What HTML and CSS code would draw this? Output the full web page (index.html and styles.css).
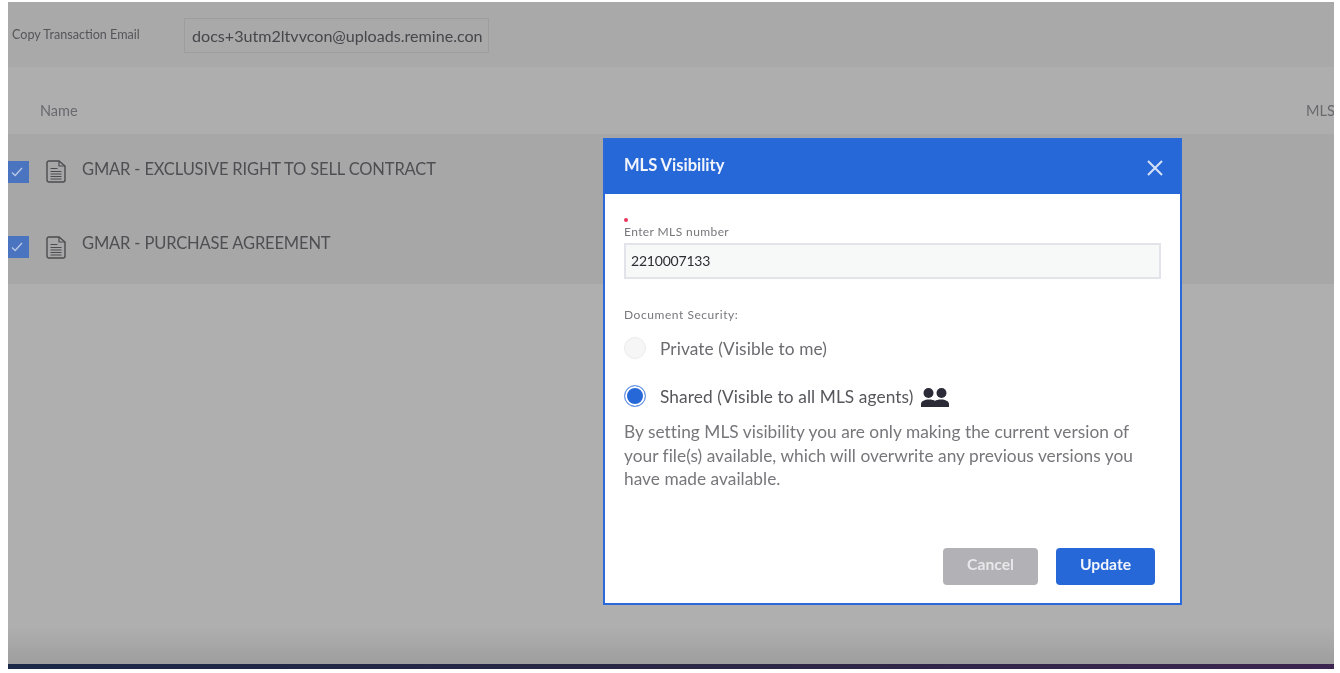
FILE: index.html
```html
<!DOCTYPE html>
<html lang="en">
<head>
<meta charset="utf-8">
<title>MLS Visibility</title>
<link rel="stylesheet" href="styles.css">
</head>
<body>
<div class="screen">
  <div class="email-bar">
    <span class="email-label">Copy Transaction Email</span>
    <div class="email-box">docs+3utm2ltvvcon@uploads.remine.con</div>
  </div>
  <div class="table-head">
    <span class="col-name">Name</span>
    <span class="col-mls">MLS</span>
  </div>
  <div class="rows">
    <div class="row">
      <span class="check"><svg width="12" height="10" viewBox="0 0 12 10"><path d="M1 5.5l3.2 3L11 1" fill="none" stroke="#b9c9e6" stroke-width="1.3"/></svg></span>
      <svg class="doc" width="20" height="23" viewBox="0 0 20 23"><path d="M1 3a2 2 0 0 1 2-2h10l6 5v14a2 2 0 0 1-2 2H3a2 2 0 0 1-2-2z" fill="none" stroke="#4c4c50" stroke-width="1.4"/><path d="M13 1v5h6M4.500 8.500h7M4.500 11.500h11M4.500 14h11M4.500 16.500h11M4.500 19h11" fill="none" stroke="#4c4c50" stroke-width="1.2"/></svg>
      <span class="row-name">GMAR - EXCLUSIVE RIGHT TO SELL CONTRACT</span>
    </div>
    <div class="row">
      <span class="check"><svg width="12" height="10" viewBox="0 0 12 10"><path d="M1 5.5l3.2 3L11 1" fill="none" stroke="#b9c9e6" stroke-width="1.3"/></svg></span>
      <svg class="doc" width="20" height="23" viewBox="0 0 20 23"><path d="M1 3a2 2 0 0 1 2-2h10l6 5v14a2 2 0 0 1-2 2H3a2 2 0 0 1-2-2z" fill="none" stroke="#4c4c50" stroke-width="1.4"/><path d="M13 1v5h6M4.500 8.500h7M4.500 11.500h11M4.500 14h11M4.500 16.500h11M4.500 19h11" fill="none" stroke="#4c4c50" stroke-width="1.2"/></svg>
      <span class="row-name">GMAR - PURCHASE AGREEMENT</span>
    </div>
  </div>
  <div class="filler"></div>
  <div class="dock"></div>
</div>

<section class="modal">
  <header class="modal-head">
    <h2 class="modal-title">MLS Visibility</h2>
    <svg class="close" width="16" height="16" viewBox="0 0 16 16"><path d="M1 1l14 14M15 1L1 15" stroke="#d6e2f7" stroke-width="2" fill="none"/></svg>
  </header>
  <div class="modal-body">
    <span class="req-dot"></span>
    <label class="field-label">Enter MLS number</label>
    <div class="field">2210007133</div>
    <p class="sec-label">Document Security:</p>
    <div class="option option-private">
      <span class="radio"></span>
      <span>Private (Visible to me)</span>
    </div>
    <div class="option option-shared">
      <span class="radio radio-on"></span>
      <span>Shared (Visible to all MLS agents)</span>
      <svg class="people" width="30" height="21" viewBox="0 0 30 21"><circle cx="8.500" cy="6" r="5" fill="#2b2b38"/><circle cx="21.500" cy="6" r="5" fill="#2b2b38"/><path d="M1 20v-3c0-3 4-4.500 7.500-4.500S14 13 15 14c1-1 3-1.500 6.500-1.500S29 14 29 17v3z" fill="#2b2b38"/></svg>
    </div>
    <p class="note">By setting MLS visibility you are only making the current version of your file(s) available, which will overwrite any previous versions you have made available.</p>
    <div class="actions">
      <button class="btn btn-cancel">Cancel</button>
      <button class="btn btn-update">Update</button>
    </div>
  </div>
</section>
</body>
</html>
```
FILE: styles.css
```css
* { box-sizing: border-box; }
html, body { margin: 0; height: 100%; background: #fff; overflow: hidden; }
body {
  padding: 2px 6px 4px 8px;
  font-family: "Lato", "Liberation Sans", sans-serif;
}
.screen {
  height: 667px;
  display: flex;
  flex-direction: column;
  background: #afafaf;
  filter: blur(0.35px);
}
.email-bar {
  height: 65px;
  flex: none;
  background: #a9a9a9;
  display: flex;
  align-items: center;
  padding-left: 4px;
  padding-top: 2px;
}
.email-label {
  width: 172px;
  font-size: 12.6px;
  color: #55555a;
  margin-bottom: 3px;
}
.email-box {
  width: 305px;
  height: 35px;
  border: 1px solid #9e9ea1;
  padding-left: 7px;
  font-size: 16.1px;
  line-height: 33px;
  color: #46464b;
  white-space: nowrap;
  overflow: hidden;
}
.table-head {
  height: 67px;
  flex: none;
  background: #aeaeae;
  display: flex;
  justify-content: space-between;
  align-items: center;
  padding: 20px 0 0 32px;
  font-size: 14.5px;
  color: #69696e;
}
.col-mls { width: 28px; overflow: hidden; }
.rows { flex: none; background: #a7a7a7; }
.row {
  height: 75px;
  display: flex;
  align-items: center;
  padding-bottom: 6px;
}
.row + .row { padding-bottom: 5px; }
.check {
  width: 21px;
  height: 22px;
  margin-top: 6px;
  background: #4a74c0;
  display: flex;
  align-items: center;
  justify-content: center;
  padding-right: 4px;
}
.doc { margin: 6px 0 0 17px; flex: none; }
.row-name {
  margin-left: 16px;
  margin-top: 1px;
  font-size: 16.5px;
  letter-spacing: -0.15px;
  color: #4f4f53;
  white-space: nowrap;
}
.row + .row .row-name { margin-top: -2px; }
.filler {
  flex: 1;
  background: linear-gradient(#afafaf 90%, #9e9e9e 100%);
}
.dock {
  height: 5px;
  flex: none;
  background: linear-gradient(90deg, #1b2848, #2a2745 50%, #3c2550);
}
.modal {
  position: absolute;
  left: 603px;
  top: 138px;
  width: 579px;
  height: 467px;
  border: 2px solid #2a69d9;
  background: #fff;
  display: flex;
  flex-direction: column;
  filter: blur(0.3px);
}
.modal-head {
  height: 54px;
  flex: none;
  background: #2768d8;
  display: flex;
  align-items: center;
  justify-content: space-between;
  padding: 0 17px 0 19px;
}
.modal-title {
  margin: -5px 0 0;
  font-size: 16.5px;
  font-weight: 700;
  color: #f2f5fc;
}
.close { margin-top: 2px; }
.modal-body {
  flex: 1;
  display: flex;
  flex-direction: column;
  padding: 24px 19px 18px;
  color: #6f6f73;
}
.req-dot {
  width: 4px;
  height: 4px;
  border-radius: 50%;
  background: #e8365d;
}
.field-label {
  margin-top: 3px;
  font-size: 12px;
  letter-spacing: 0.4px;
  line-height: 14px;
  color: #77777c;
}
.field {
  margin-top: 4px;
  height: 36px;
  border: 2px solid #e3e4e9;
  background: #f7f8f8;
  padding-left: 5px;
  font-size: 14px;
  letter-spacing: -0.2px;
  line-height: 31px;
  color: #2e2e33;
}
.sec-label {
  margin: 29px 0 0;
  font-size: 12px;
  letter-spacing: 0.55px;
  line-height: 14px;
  color: #77777c;
}
.option {
  display: flex;
  align-items: center;
  font-size: 17.3px;
  letter-spacing: 0.09px;
  color: #6b6b70;
  white-space: nowrap;
}
.option-private { margin-top: 14px; height: 24px; }
.option-shared { margin-top: 24px; height: 24px; color: #56565b; }
.radio {
  width: 22px;
  height: 22px;
  border-radius: 50%;
  margin-right: 14px;
  background: #f6f6f6;
  border: 1px solid #ececec;
  flex: none;
}
.radio-on {
  background: #2768d8;
  border: 1.5px solid #6f9ae6;
  box-shadow: inset 0 0 0 2px #fff;
}
.people { margin: 3px 0 0 7px; }
.note {
  margin: 12px 0 0;
  font-size: 17.3px;
  letter-spacing: 0.03px;
  line-height: 23.5px;
  color: #77777b;
}
.actions {
  margin-top: auto;
  display: flex;
  justify-content: flex-end;
  gap: 18px;
  padding-right: 6px;
}
.btn {
  height: 37px;
  border: 0;
  border-radius: 4px;
  font-family: inherit;
  font-size: 15.7px;
  font-weight: 700;
  padding: 0 0 6px;
}
.btn-cancel { width: 95px; background: #b2b2b6; color: #e8e8ea; }
.btn-update { width: 99px; background: #2768d8; color: #f2f5fc; }
```
